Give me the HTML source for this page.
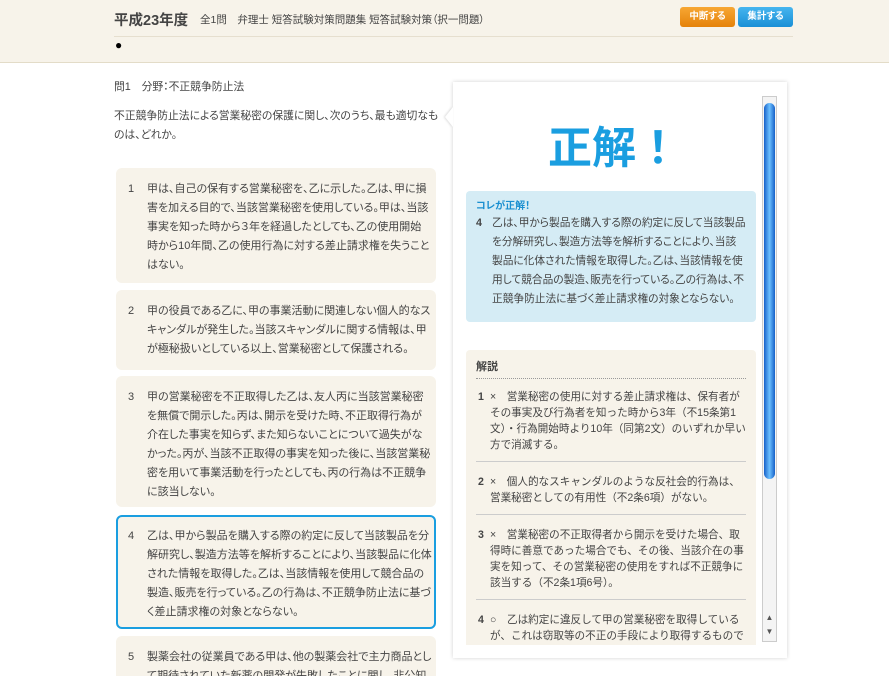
<!DOCTYPE html>
<html><head><meta charset="utf-8"><style>
*{margin:0;padding:0;box-sizing:border-box}
html,body{width:889px;height:676px;overflow:hidden}
body{background:#fff;font-family:"Liberation Sans","Noto Sans CJK JP",sans-serif;color:#444;position:relative;font-feature-settings:"palt"}
.hdr{position:absolute;left:0;top:0;width:889px;height:63px;background:#f7f3ea;border-bottom:1px solid #e3dcc8}
.hdr .t{position:absolute;left:114px;top:9px;font-size:14.5px;font-weight:bold;color:#444}
.hdr .s{position:absolute;left:200px;top:12px;font-size:10.5px;color:#444}
.hdr .line{position:absolute;left:114px;right:96px;top:36px;border-top:1px solid #e6dfcf}
.hdr .dot{position:absolute;left:115px;top:38px;font-size:12px;color:#000}
.btn{position:absolute;top:7px;height:20px;border-radius:3px;color:#fff;font-size:9.5px;font-weight:bold;text-align:center;line-height:20px}
.q{position:absolute;font-size:10.8px;color:#444}
.opt{position:absolute;left:116px;width:320px;background:#f7f3ea;border-radius:6px;font-size:11px;line-height:19px;padding:12px 4px 12px 31px;overflow:hidden}
.opt .n{position:absolute;left:12px}
.sel{border:2px solid #1a9ee0;padding:10px 2px 10px 29px}
.sel .n{left:10px}
.panel{position:absolute;left:453px;top:82px;width:334px;height:576px;background:#fff;box-shadow:0 0 4px rgba(0,0,0,.18)}
.arrow{position:absolute;left:445px;top:107px;width:0;height:0;border-top:10px solid transparent;border-bottom:10px solid transparent;border-right:8px solid #fff;filter:drop-shadow(-1px 0 1px rgba(0,0,0,.15))}
.clip{position:absolute;left:0;top:0;width:334px;height:563px;overflow:hidden}
.big{position:absolute;left:0;width:322px;top:30px;text-align:center;font-size:44px;font-weight:bold;color:#1a9ee0;font-feature-settings:normal}
.ans{position:absolute;left:13px;top:109px;width:290px;height:131px;background:#d5ecf5;border-radius:4px;padding:6px 10px}
.ans .h{font-size:10px;font-weight:bold;color:#1a8fd0}
.ans .b{font-size:10.7px;line-height:19px;margin-top:2px;padding-left:16px;position:relative}
.ans .b b{position:absolute;left:0}
.exp{position:absolute;left:13px;top:268px;width:290px;height:320px;background:#f7f3ea;border-radius:4px;padding:8px 10px}
.exp .h{font-size:11px;font-weight:bold;border-bottom:1px dotted #999;padding-bottom:4px}
.exp .it{position:relative;font-size:10.6px;line-height:16px;padding:10px 0 8px 14px;border-bottom:1px solid #ccc;font-feature-settings:normal}
.exp .it+.it{padding-top:12px}
.exp .it b{position:absolute;left:2px}
.sb{position:absolute;left:309px;top:14px;width:15px;height:546px;background:#f4f4f4;border:1px solid #ccc}
.thumb{position:absolute;left:1px;top:6px;width:11px;height:376px;border-radius:6px;background:linear-gradient(90deg,#1660c8,#6cc0ff 50%,#1660c8)}
.ar{position:absolute;left:0;width:13px;font-size:8px;text-align:center;color:#555}
</style></head><body>
<div class="hdr">
<div class="t">平成23年度</div>
<div class="s">全1問　弁理士 短答試験対策問題集 短答試験対策（択一問題）</div>
<div class="line"></div>
<div class="dot">●</div>
<div class="btn" style="left:680px;width:55px;background:linear-gradient(#f7a733,#e5820a)">中断する</div>
<div class="btn" style="left:738px;width:55px;background:linear-gradient(#45b5ef,#1a8fd6)">集計する</div>
</div>
<div class="q" style="left:114px;top:78px">問1　分野：不正競争防止法</div>
<div class="q" style="left:114px;top:107px;width:325px;line-height:19px">不正競争防止法による営業秘密の保護に関し、次のうち、最も適切なものは、どれか。</div>

<div class="opt" style="top:168px;height:115px"><span class="n">1</span>甲は、自己の保有する営業秘密を、乙に示した。乙は、甲に損害を加える目的で、当該営業秘密を使用している。甲は、当該事実を知った時から３年を経過したとしても、乙の使用開始時から10年間、乙の使用行為に対する差止請求権を失うことはない。</div>
<div class="opt" style="top:290px;height:80px"><span class="n">2</span>甲の役員である乙に、甲の事業活動に関連しない個人的なスキャンダルが発生した。当該スキャンダルに関する情報は、甲が極秘扱いとしている以上、営業秘密として保護される。</div>
<div class="opt" style="top:376px;height:131px"><span class="n">3</span>甲の営業秘密を不正取得した乙は、友人丙に当該営業秘密を無償で開示した。丙は、開示を受けた時、不正取得行為が介在した事実を知らず、また知らないことについて過失がなかった。丙が、当該不正取得の事実を知った後に、当該営業秘密を用いて事業活動を行ったとしても、丙の行為は不正競争に該当しない。</div>
<div class="opt sel" style="top:515px;height:114px"><span class="n">4</span>乙は、甲から製品を購入する際の約定に反して当該製品を分解研究し、製造方法等を解析することにより、当該製品に化体された情報を取得した。乙は、当該情報を使用して競合品の製造、販売を行っている。乙の行為は、不正競争防止法に基づく差止請求権の対象とならない。</div>
<div class="opt" style="top:636px;height:40px;border-radius:6px 6px 0 0"><span class="n">5</span>製薬会社の従業員である甲は、他の製薬会社で主力商品として期待されていた新薬の開発が失敗したことに関し、非公知の情報を</div>

<div class="panel">
<div class="clip">
<div class="big">正解！</div>
<div class="ans"><div class="h">コレが正解！</div><div class="b"><b>4</b>乙は、甲から製品を購入する際の約定に反して当該製品を分解研究し、製造方法等を解析することにより、当該製品に化体された情報を取得した。乙は、当該情報を使用して競合品の製造、販売を行っている。乙の行為は、不正競争防止法に基づく差止請求権の対象とならない。</div></div>
<div class="exp"><div class="h">解説</div>
<div class="it"><b>1</b>×　営業秘密の使用に対する差止請求権は、保有者がその事実及び行為者を知った時から3年（不15条第1文）・行為開始時より10年（同第2文）のいずれか早い方で消滅する。</div>
<div class="it"><b>2</b>×　個人的なスキャンダルのような反社会的行為は、営業秘密としての有用性（不2条6項）がない。</div>
<div class="it"><b>3</b>×　営業秘密の不正取得者から開示を受けた場合、取得時に善意であった場合でも、その後、当該介在の事実を知って、その営業秘密の使用をすれば不正競争に該当する（不2条1項6号）。</div>
<div class="it" style="border:none"><b>4</b>○　乙は約定に違反して甲の営業秘密を取得しているが、これは窃取等の不正の手段により取得するものではなく不正取得行為には該当しない（不2条1項4号）。</div>
</div>
</div>
<div class="sb"><div class="thumb"></div><div class="ar" style="top:516px">▲</div><div class="ar" style="top:530px">▼</div></div>
</div>
<div class="arrow"></div>
</body></html>
